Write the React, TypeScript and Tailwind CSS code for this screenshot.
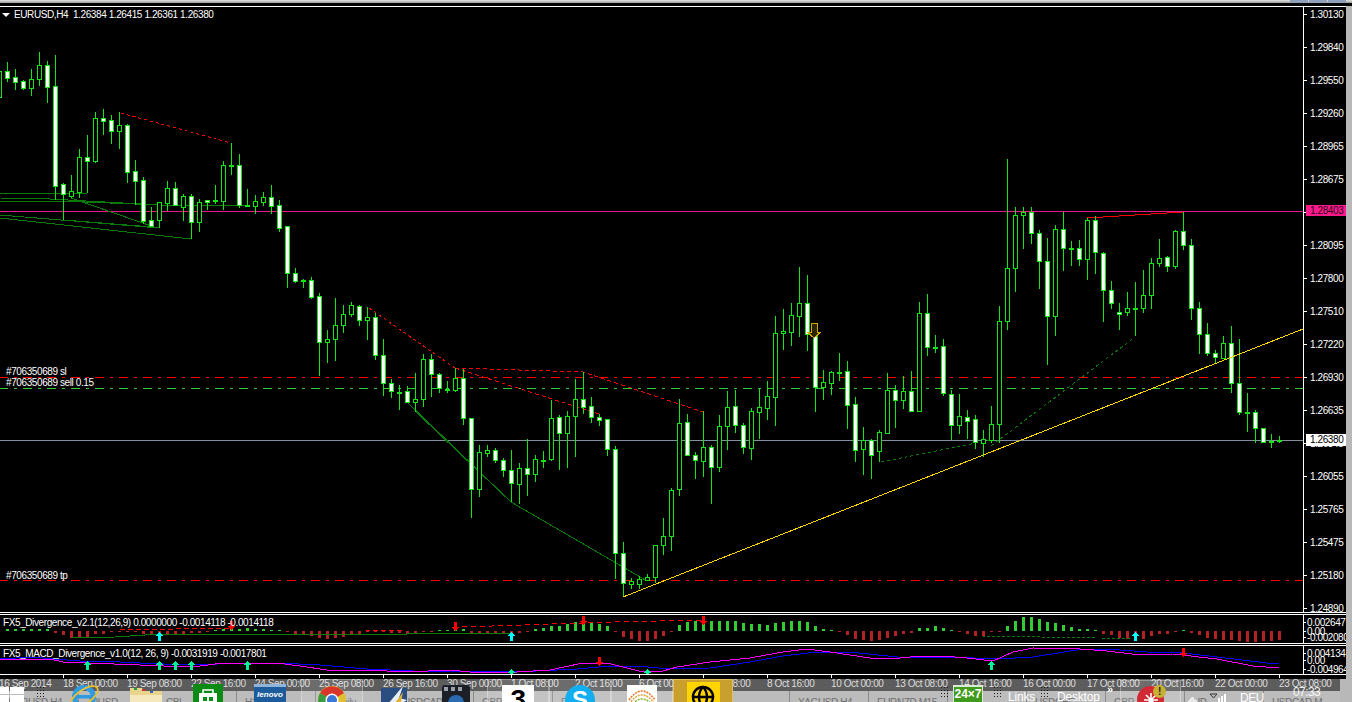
import { Globe } from "lucide-react";

// [high, bodyTop, bodyBottom, low, filled] -- one candle every 8px starting at x=-1
const candles: [number, number, number, number, number][] = [
  [60, 71, 97, 100, 0], [62, 71, 78, 82, 1], [69, 77, 82, 90, 1], [80, 81, 88, 90, 1], [69, 79, 88, 96, 0], [52, 65, 79, 86, 0], [61, 65, 87, 103, 1], [55, 86, 186, 200, 1],
  [183, 184, 194, 220, 1], [175, 191, 196, 198, 0], [149, 157, 192, 198, 0], [135, 157, 161, 193, 1], [112, 118, 161, 163, 0], [109, 118, 121, 135, 1], [115, 120, 131, 144, 1], [112, 125, 131, 149, 0],
  [124, 125, 172, 183, 1], [160, 171, 181, 205, 1], [177, 180, 221, 224, 1], [207, 220, 226, 226, 1], [202, 202, 220, 228, 0], [181, 188, 203, 211, 0], [182, 188, 205, 206, 1], [194, 196, 207, 221, 0],
  [194, 196, 222, 239, 1], [199, 202, 222, 232, 0], [200, 200, 202, 210, 1], [185, 200, 200, 204, 2], [161, 165, 201, 210, 0], [143, 165, 165, 175, 2], [154, 165, 205, 208, 1], [189, 205, 205, 206, 2],
  [195, 201, 206, 214, 0], [192, 197, 202, 206, 0], [185, 197, 206, 214, 1], [200, 205, 228, 232, 1], [226, 226, 273, 288, 1], [268, 273, 281, 283, 1], [279, 280, 280, 288, 2], [277, 280, 297, 299, 1],
  [293, 296, 342, 376, 1], [330, 339, 342, 363, 0], [298, 325, 339, 361, 0], [305, 314, 325, 333, 0], [302, 305, 314, 317, 0], [305, 306, 320, 326, 1], [307, 317, 320, 340, 0], [313, 317, 355, 360, 1],
  [339, 355, 383, 396, 1], [379, 383, 391, 398, 1], [385, 392, 392, 410, 2], [386, 391, 402, 403, 1], [373, 399, 402, 412, 0], [354, 359, 399, 407, 0], [354, 359, 374, 397, 1], [373, 374, 388, 393, 1],
  [381, 389, 389, 393, 2], [368, 378, 390, 392, 0], [369, 378, 418, 425, 1], [418, 418, 489, 518, 1], [445, 452, 489, 497, 0], [445, 450, 453, 457, 0], [448, 450, 460, 463, 1], [458, 460, 470, 477, 1],
  [450, 470, 483, 502, 1], [463, 468, 484, 504, 0], [439, 468, 474, 496, 1], [455, 459, 474, 482, 0], [451, 460, 460, 468, 2], [400, 418, 459, 461, 0], [415, 417, 433, 470, 1], [411, 416, 433, 468, 0],
  [379, 399, 416, 457, 0], [372, 399, 407, 414, 1], [397, 406, 417, 423, 1], [414, 417, 420, 426, 1], [419, 419, 449, 456, 1], [446, 449, 553, 579, 1], [542, 553, 583, 597, 1], [578, 581, 584, 589, 0],
  [576, 579, 584, 589, 0], [574, 577, 580, 581, 0], [545, 545, 577, 583, 0], [518, 536, 545, 555, 0], [488, 490, 536, 551, 0], [399, 423, 489, 496, 0], [414, 422, 455, 456, 1], [452, 455, 460, 479, 1],
  [411, 447, 461, 477, 0], [445, 447, 467, 504, 1], [415, 426, 467, 472, 0], [391, 407, 426, 450, 0], [390, 406, 425, 433, 1], [423, 425, 447, 454, 1], [408, 411, 448, 460, 0], [388, 407, 412, 439, 0],
  [381, 396, 408, 420, 0], [316, 333, 397, 426, 0], [309, 331, 333, 350, 0], [303, 315, 332, 346, 0], [267, 303, 316, 337, 0], [275, 303, 334, 351, 1], [334, 334, 387, 412, 1], [370, 382, 387, 400, 0],
  [371, 372, 383, 395, 0], [353, 372, 372, 381, 2], [361, 371, 405, 429, 1], [397, 404, 450, 462, 1], [427, 440, 449, 475, 0], [439, 440, 455, 479, 1], [430, 432, 451, 462, 0], [373, 390, 433, 433, 0],
  [385, 390, 400, 428, 1], [376, 391, 400, 409, 0], [371, 391, 411, 412, 1], [302, 313, 411, 411, 0], [294, 313, 347, 356, 1], [335, 347, 347, 353, 2], [339, 346, 393, 396, 1], [390, 394, 425, 440, 1],
  [394, 416, 425, 434, 0], [410, 417, 421, 439, 1], [415, 419, 442, 449, 1], [430, 439, 443, 457, 0], [406, 424, 440, 443, 0], [306, 321, 424, 443, 0], [159, 268, 321, 330, 0], [207, 215, 268, 292, 0],
  [207, 212, 215, 249, 0], [207, 212, 233, 244, 1], [230, 233, 261, 289, 1], [238, 261, 316, 365, 1], [225, 229, 316, 336, 0], [212, 229, 248, 271, 1], [241, 248, 248, 266, 2], [240, 248, 259, 266, 1],
  [218, 220, 259, 280, 0], [216, 220, 252, 274, 1], [252, 253, 290, 322, 1], [281, 290, 303, 309, 1], [303, 312, 314, 330, 1], [292, 308, 312, 316, 0], [282, 308, 308, 336, 2], [270, 295, 308, 313, 0],
  [258, 263, 295, 309, 0], [239, 258, 263, 267, 0], [256, 257, 266, 272, 1], [230, 231, 266, 269, 0], [212, 231, 245, 250, 1], [239, 245, 308, 320, 1], [302, 308, 334, 354, 1], [323, 334, 353, 356, 1],
  [350, 353, 357, 363, 1], [336, 343, 358, 359, 0], [326, 343, 383, 393, 1], [339, 383, 412, 415, 1], [393, 412, 412, 432, 2], [410, 412, 428, 443, 1], [428, 428, 442, 443, 1], [434, 441, 441, 448, 2],
  [436, 440, 440, 443, 2],
];

// signed height of the histogram bar, first bar at x=7, one every 8px
const bars = [
  2, 2, 2, 2, 2, 2, -2, -4, -7, -7, -6, -3, -3, -1, -1, -1, -1, -3, -4, -5, -4, -3, -3, -2, -2, -1, 1, 2, 2, 2, 3, 2, 2, 1, 1, -1, -3, -3, -5, -7, -8, -7, -6, -4, -3, -1, -1, -1, -2, -2, -3, -3, -1, -1, 1, 1, 1,
  2, -2, -2, -2, -2, -2, -2, -2, -1, 2, 3, 5, 5, 7, 9, 10, 8, 7, 5, -1, -6, -8, -10, -10, -8, -5, -1, 6, 9, 10, 10, 10, 10, 10, 10, 8, 7, 7, 6, 8, 9, 10, 10, 9, 5, 2, 1, -1, -4, -8, -9, -10, -9, -7, -5,
  -3, -2, 3, 3, 5, 3, 1, -1, -3, -5, -5, -1, -1, 5, 10, 14, 14, 12, 9, 8, 6, 4, 2, 2, 1, -3, -4, -7, -8, -8, -8, -5, -3, -3, -1, 1, -2, -4, -7, -8, -9, -9, -10, -11, -11, -10, -10, -9,
];

const prices = ["1.30130", "1.29840", "1.29550", "1.29260", "1.28965", "1.28675", "1.28385", "1.28095", "1.27800", "1.27510", "1.27220", "1.26930", "1.26635", "1.26345", "1.26055", "1.25765", "1.25475", "1.25180", "1.24890"];
const times = ["16 Sep 2014", "18 Sep 00:00", "19 Sep 08:00", "22 Sep 16:00", "24 Sep 00:00", "25 Sep 08:00", "26 Sep 16:00", "30 Sep 00:00", "1 Oct 08:00", "2 Oct 16:00", "6 Oct 00:00", "7 Oct 08:00", "8 Oct 16:00", "10 Oct 00:00", "13 Oct 08:00", "14 Oct 16:00", "16 Oct 00:00", "17 Oct 08:00", "20 Oct 16:00", "22 Oct 00:00", "23 Oct 08:00"];
const tabs = ["EURUSD,H4", "JPUSD", "CBL", "H1", "JF,Daily", "USDCAD", "GBP,M1", "EURAL", "", "", "XAGUSD,H4", "EURNZD,M15", "EUR", "USDCHF", "GBP", "UD", "USDCAD,M"];

const GREEN = "#14e614";
const DARK = "#0a7a0a";
const RED = "#ff0000";

const mainLines: { pts: string; color: string; dash?: string }[] = [
  // dark green divergence lines
  { pts: "0,193 87,193", color: DARK },
  { pts: "0,198 50,199 159,205 247,205", color: DARK },
  { pts: "0,201 60,201 159,205", color: DARK },
  { pts: "0,215 159,228", color: DARK },
  { pts: "0,218 191,239", color: DARK },
  { pts: "63,220 153,227", color: DARK },
  { pts: "71,198 157,228", color: DARK },
  { pts: "407,402 511,502 623,567 647,581", color: DARK },
  { pts: "415,411 511,502", color: DARK },
  { pts: "881,462 991,440", color: DARK, dash: "3 3" },
  { pts: "991,446 1135,337", color: DARK, dash: "3 3" },
  // red divergence lines
  { pts: "121,113 231,143", color: RED, dash: "3 3" },
  { pts: "369,308 455,368", color: RED, dash: "3 3" },
  { pts: "455,368 583,372 703,412", color: RED, dash: "4 3" },
  { pts: "455,368 599,414", color: RED, dash: "4 3" },
  { pts: "1087,218 1183,212", color: RED },
];

const blue = "0,659 33,657 53,659 80,661 100,661 140,663 187,665 217,664 247,663 277,663 320,665 367,669 413,671 450,671 490,672 537,671 577,669 610,666 637,666 670,669 710,668 750,662 783,656 817,652 850,652 897,657 950,657 997,659 1033,657 1083,649 1107,649 1147,652 1183,653 1217,657 1267,663 1279,664";
const magenta = "0,660 10,659 50,659 63,662 87,663 140,665 187,667 200,666 223,663 277,663 300,666 327,670 367,670 407,672 450,670 470,672 517,672 550,670 583,663 607,663 643,672 663,671 677,667 710,662 750,658 783,652 807,649 830,652 870,658 900,658 920,656 943,656 967,658 993,661 1013,652 1033,648 1080,649 1107,651 1140,655 1173,654 1217,659 1253,666 1279,668";

function Arrow({ x, y, up, color }: { x: number; y: number; up?: boolean; color: string }) {
  const c = x + 0.5;
  const d = up ? 1 : -1;
  const tip = up ? y : y + 9;
  const pts = [
    [c, tip],
    [c + 4, tip + 4 * d],
    [c + 1.5, tip + 4 * d],
    [c + 1.5, tip + 9 * d],
    [c - 1.5, tip + 9 * d],
    [c - 1.5, tip + 4 * d],
    [c - 4, tip + 4 * d],
  ];
  return <polygon points={pts.map((p) => p.join(",")).join(" ")} fill={color} />;
}

function Grip() {
  return <div className="w-[9px] h-[12px] mt-[7px] bg-[radial-gradient(#1c1c1c_1px,transparent_1px)] bg-[length:3px_3px]" />;
}

function Slot({ active, children }: { active?: boolean; children: React.ReactNode }) {
  return (
    <div className={"w-[62px] h-[23px] flex justify-center pt-[5px] " + (active ? "bg-white/10 border border-b-0 border-white/30" : "")}>
      {children}
    </div>
  );
}

export default function App() {
  return (
    <div className="w-[1352px] h-[702px] overflow-hidden bg-black flex flex-col font-['Liberation_Sans',sans-serif] text-white text-[10px] tracking-[-0.4px] leading-[10px]">
      {/* window edge */}
      <div className="h-[3px] shrink-0 bg-gradient-to-b from-[#e4e4e4] to-[#9a9a9a] flex justify-end pr-[6px] gap-[1px]">
        <div className="w-[18px] bg-[#8fa0b8]" />
        <div className="w-[18px] bg-[#8fa0b8]" />
        <div className="w-[18px] bg-[#8fa0b8]" />
      </div>
      <div className="h-[3px] shrink-0" />

      <div className="flex flex-1 min-h-0">
        <div className="w-[1346px] flex flex-col">
          {/* main chart */}
          <div className="h-[607px] shrink-0 flex border-t border-b border-white">
            <div className="relative w-[1303px] h-full overflow-hidden">
              <svg width={1303} height={605} viewBox="0 7 1303 605" shapeRendering="crispEdges" className="block">
                <line x1={0} x2={1303} y1={211.5} y2={211.5} stroke="#e6188c" />
                <line x1={0} x2={1303} y1={440.5} y2={440.5} stroke="#8090a0" />
                <line x1={0} x2={1303} y1={377.5} y2={377.5} stroke={RED} strokeDasharray="9 6 3 6" strokeDashoffset={1} />
                <line x1={0} x2={1303} y1={388.5} y2={388.5} stroke="#32cd32" strokeDasharray="9 6 3 6" strokeDashoffset={1} />
                <line x1={0} x2={1303} y1={580.5} y2={580.5} stroke={RED} strokeDasharray="9 6 3 6" strokeDashoffset={1} />
                {mainLines.map((l, i) => (
                  <polyline key={i} points={l.pts} fill="none" stroke={l.color} strokeDasharray={l.dash} />
                ))}
                {candles.map(([h, t, b, l, kind], i) => {
                  const x = -1 + i * 8;
                  return (
                    <g key={i}>
                      <line x1={x + 0.5} x2={x + 0.5} y1={h} y2={l} stroke={GREEN} />
                      {kind === 2 ? (
                        <rect x={x - 2} y={t} width={5} height={2} fill={GREEN} />
                      ) : (
                        <rect x={x - 1.5} y={t + 0.5} width={4} height={b - t} fill={kind === 1 ? "#ffffff" : "#000000"} stroke={GREEN} />
                      )}
                    </g>
                  );
                })}
                <polyline points="623,597 1303,329" fill="none" stroke="#ffd700" />
                <polygon points="811,323 817,323 817,332 821,332 814,338 807,332 811,332" fill="#2a2400" stroke="#d4a800" />
              </svg>
              <div className="absolute left-[2px] top-[6px] w-0 h-0 border-l-[4px] border-r-[4px] border-t-[4px] border-l-transparent border-r-transparent border-t-white" />
              <div className="absolute left-[14px] top-[3px] whitespace-pre">EURUSD,H4  1.26384 1.26415 1.26361 1.26380</div>
              <div className="absolute left-[6px] top-[360px]">#706350689 sl</div>
              <div className="absolute left-[6px] top-[371px]">#706350689 sell 0.15</div>
              <div className="absolute left-[6px] top-[564px]">#706350689 tp</div>
            </div>
            <div className="relative w-[43px] border-l border-white pt-[3px]">
              {prices.map((p) => (
                <div key={p} className="h-[33px] flex items-start gap-[3px]">
                  <div className="w-[3px] h-px mt-[4px] bg-white shrink-0" />
                  <span className="leading-[9px]">{p}</span>
                </div>
              ))}
              <div className="absolute left-[2px] right-0 top-[198px] h-[11px] bg-[#ff1a8c] text-[#2a0a1a] pl-[4px] leading-[11px]">1.28403</div>
              <div className="absolute left-[2px] right-0 top-[427px] h-[12px] bg-white text-black pl-[4px] leading-[12px]">1.26380</div>
            </div>
          </div>

          <div className="h-px shrink-0" />

          {/* divergence histogram */}
          <div className="h-[30px] shrink-0 flex border-t border-b border-white">
            <div className="relative w-[1303px] overflow-hidden">
              <svg width={1303} height={28} viewBox="0 615 1303 28" shapeRendering="crispEdges" className="block">
                {bars.map((v, i) => {
                  const x = 7 + i * 8;
                  return <rect key={i} x={x - 1} y={v > 0 ? 631 - v : 631} width={3} height={Math.abs(v)} fill={v > 0 ? "#32cd32" : "#b22222"} />;
                })}
                <polyline points="72,638 115,637 145,635 175,634 407,634 510,633" fill="none" stroke={DARK} />
                <polyline points="982,636 1097,638 1130,638" fill="none" stroke={DARK} strokeDasharray="3 2" />
                <polyline points="120,630 231,628" fill="none" stroke={RED} strokeDasharray="5 3" />
                <polyline points="365,630 403,631" fill="none" stroke={RED} strokeDasharray="5 3" />
                <polyline points="462,627 613,622 703,620" fill="none" stroke={RED} strokeDasharray="5 4" />
                <Arrow x={159} y={632} up color="#00ffff" />
                <Arrow x={511} y={632} up color="#00ffff" />
                <Arrow x={1135} y={632} up color="#00ffff" />
                <Arrow x={231} y={621} color="#ff0000" />
                <Arrow x={455} y={622} color="#ff0000" />
                <Arrow x={583} y={616} color="#ff0000" />
                <Arrow x={703} y={616} color="#ff0000" />
              </svg>
              <div className="absolute left-[3px] top-[3px] whitespace-pre">FX5_Divergence_v2.1(12,26,9) 0.0000000 -0.0014118 -0.0014118</div>
            </div>
            <div className="w-[43px] border-l border-white pt-[3px] overflow-hidden">
              <AxisRow h="h-[9px]" text="0.002647" />
              <AxisRow h="h-[6px]" text="0.00" />
              <AxisRow h="h-[9px]" text="-0.002080" />
            </div>
          </div>

          <div className="h-px shrink-0" />

          {/* macd */}
          <div className="h-[30px] shrink-0 flex border-t border-b border-white">
            <div className="relative w-[1303px] overflow-hidden">
              <svg width={1303} height={28} viewBox="0 646 1303 28" shapeRendering="crispEdges" className="block">
                <polyline points={blue} fill="none" stroke="#0000ff" />
                <polyline points={magenta} fill="none" stroke="#ff00ff" />
                {[87, 159, 175, 191, 247, 511, 647, 991].map((x) => (
                  <Arrow key={x} x={x} y={x === 511 || x === 647 ? 669 : 661} up color="#00f29a" />
                ))}
                <Arrow x={599} y={657} color="#ff0000" />
                <Arrow x={1183} y={648} color="#ff0000" />
              </svg>
              <div className="absolute left-[3px] top-[3px] whitespace-pre">FX5_MACD_Divergence_v1.0(12, 26, 9) -0.0031919 -0.0017801</div>
            </div>
            <div className="w-[43px] border-l border-white pt-[3px] overflow-hidden">
              <AxisRow h="h-[7px]" text="0.004134" />
              <AxisRow h="h-[9px]" text="0.00" />
              <AxisRow h="h-[9px]" text="-0.004964" />
            </div>
          </div>
        </div>
        <div className="w-[6px] bg-[#b8b8b8]" />
      </div>

      {/* time scale ticks */}
      <div className="h-[4px] shrink-0 flex pl-[63px] border-r-[6px] border-[#b8b8b8]">
        {times.slice(1).map((t) => (
          <div key={t} className="w-[64px] h-[3px] border-l border-white" />
        ))}
      </div>

      {/* time scale + taskbar over it */}
      <div className="relative h-[23px] shrink-0 bg-[#5c5c5c]">
        <div className="flex -ml-[1px]">
          {times.map((t) => (
            <div key={t} className="w-[64px] shrink-0 whitespace-nowrap leading-[10px] text-[#dcdcdc]">{t}</div>
          ))}
        </div>
        <div className="absolute left-0 right-0 bottom-0 h-[11px] bg-[#bcbcbc] flex overflow-hidden text-[#6e6e6e]">
          {tabs.map((t, i) => (
            <div key={i} className="w-[79px] shrink-0 pl-[8px] pt-[7px] border-r border-[#8c8c8c] leading-[10px] whitespace-nowrap">{t}</div>
          ))}
        </div>
        <div className="absolute right-0 top-0 bottom-0 w-[12px] bg-[#b8b8b8]" />
        <div className="absolute inset-0 flex overflow-hidden text-white">
          <div className="w-[24px] h-[16px] mt-[8px] grid grid-cols-[9px_14px] grid-rows-[7px_8px] gap-[1px]">
            <div className="bg-white" />
            <div className="bg-white" />
            <div className="bg-white" />
            <div className="bg-white" />
          </div>
          <div className="ml-[12px]"><Grip /></div>
          <div className="ml-[8px] flex">
            <Slot><IEIcon /></Slot>
            <Slot><FolderIcon /></Slot>
            <Slot><StoreIcon /></Slot>
            <Slot><LenovoIcon /></Slot>
            <Slot active><ChromeIcon /></Slot>
            <Slot><PlaneIcon /></Slot>
            <Slot><FilmIcon /></Slot>
            <Slot active><div className="w-[32px] h-[30px] bg-white text-black text-[28px] leading-[30px] font-bold text-center">3</div></Slot>
            <Slot active><SkypeIcon /></Slot>
            <Slot active><WaveIcon /></Slot>
            <div className="w-[60px] h-[23px] bg-[#c9a02e] border border-b-0 border-[#e2c060] flex justify-center pt-[2px]">
              <div className="w-[33px] h-[30px] bg-[#ffd400] flex justify-center pt-[3px]"><Globe size={24} strokeWidth={2.4} color="#000" /></div>
            </div>
          </div>
          <div className="ml-[207px]"><Grip /></div>
          <div className="ml-[4px] w-[30px] h-[24px] mt-[6px] bg-[#3f9a1e] border-t-2 border-x border-white/80 text-[12px] font-bold text-center leading-[14px] tracking-normal">24×7</div>
          <div className="ml-[10px]"><Grip /></div>
          <div className="ml-[6px] w-[26px] mt-[12px] text-[12px] leading-[12px] tracking-[-0.2px]">Links</div>
          <div className="ml-[6px]"><Grip /></div>
          <div className="ml-[8px] w-[42px] mt-[12px] text-[12px] leading-[12px] tracking-[-0.2px]">Desktop</div>
          <div className="ml-[8px] w-[6px] mt-[5px] text-[11px] font-bold">»</div>
          <div className="ml-[7px] w-[61px] h-[23px] mt-[1px] bg-white/10 border border-b-0 border-white/30 flex justify-center relative">
            <div className="w-[27px] h-[27px] mt-[5px] rounded-full bg-[#d22a34] flex justify-center pt-[7px]">
              <svg width={14} height={14} viewBox="0 0 14 14">
                <path d="M7 0 v14 M0 7 h14 M2 2 l10 10 M12 2 l-10 10" stroke="#fff" strokeWidth={1.6} />
              </svg>
            </div>
            <div className="absolute left-[32px] top-[4px] w-[13px] h-[13px] rounded-full bg-[#c8b030] text-[#222] text-[10px] font-bold text-center leading-[13px]">!</div>
          </div>
          <svg width={38} height={23} viewBox="0 0 38 23" className="ml-[7px]">
            <polyline points="0,23 4.5,18 9,23" fill="#e8e8e8" stroke="#fff" />
            <path d="M22 15 h7 l-3.5 4 z" fill="none" stroke="#333" />
            <rect x={30} y={19} width={2} height={4} fill="#fff" />
            <rect x={33} y={17} width={2} height={6} fill="#fff" />
            <rect x={36} y={15} width={2} height={8} fill="#fff" />
          </svg>
          <div className="ml-[14px] w-[22px] mt-[13px] text-[12px] leading-[12px] tracking-[-0.4px]">DEU</div>
          <div className="ml-[31px] mt-[7px] text-[12px] leading-[12px] tracking-[-0.6px] text-white/90">07:33</div>
        </div>
      </div>
    </div>
  );
}

function AxisRow({ h, text }: { h: string; text: string }) {
  return (
    <div className={h + " flex items-start gap-[1px] whitespace-nowrap"}>
      <div className="w-[2px] h-px mt-[4px] bg-white shrink-0" />
      <span className="leading-[9px]">{text}</span>
    </div>
  );
}

function IEIcon() {
  return (
    <svg width={30} height={30} viewBox="0 0 30 30" className="-mt-[2px]">
      <circle cx={15} cy={15} r={9.5} fill="none" stroke="#2f9ae0" strokeWidth={5} />
      <rect x={8} y={13} width={15} height={3.5} fill="#2f9ae0" />
      <rect x={22} y={17} width={6} height={4} fill="none" />
      <ellipse cx={15} cy={15} rx={16} ry={7} fill="none" stroke="#e8c030" strokeWidth={1.8} transform="rotate(-35 15 15)" />
    </svg>
  );
}

function FolderIcon() {
  return (
    <svg width={32} height={30} viewBox="0 0 32 30" className="mt-[3px]">
      <path d="M0 1 h12 l2 3 h18 v26 h-32 z" fill="#e8d48c" />
      <rect x={4} y={1} width={3} height={2} fill="#20a040" />
      <rect x={12} y={2} width={3} height={2} fill="#d23030" />
      <rect x={20} y={4} width={3} height={2} fill="#3060d0" />
      <rect x={0} y={8} width={32} height={22} fill="#f4e8bc" />
    </svg>
  );
}

function StoreIcon() {
  return (
    <svg width={30} height={30} viewBox="0 0 30 30">
      <rect width={30} height={30} fill="#0b8a14" />
      <path d="M10 9 v-3 h10 v3" fill="none" stroke="#fff" strokeWidth={1.5} />
      <rect x={6} y={9} width={18} height={18} fill="#fff" />
      <rect x={10} y={13} width={4} height={4} fill="#0b8a14" />
      <rect x={16} y={13} width={4} height={4} fill="#0b8a14" />
    </svg>
  );
}

function LenovoIcon() {
  return (
    <div className="w-[32px] h-[30px] bg-[#1c5c9c] border-t-[3px] border-[#8fb4d8] text-white text-[8px] font-bold italic text-center leading-[16px] tracking-normal">lenovo</div>
  );
}

function ChromeIcon() {
  return (
    <svg width={30} height={30} viewBox="0 0 30 30">
      <circle cx={15} cy={15} r={14} fill="#e0c030" />
      <path d="M15 15 L3 8 A14 14 0 0 1 27 8 Z" fill="#d8362a" />
      <path d="M15 15 L3 8 A14 14 0 0 0 15 29 Z" fill="#3a9a3e" />
      <circle cx={15} cy={15} r={6.5} fill="#fff" />
      <circle cx={15} cy={15} r={5} fill="#3a78d8" />
    </svg>
  );
}

function PlaneIcon() {
  return (
    <svg width={30} height={30} viewBox="0 0 30 30">
      <rect x={2} y={4} width={26} height={26} fill="#2a4e80" />
      <path d="M4 26 L24 2 L20 14 L28 16 L10 28 Z" fill="#e8eef6" />
      <path d="M14 22 L24 8 L22 18 Z" fill="#e0b030" />
    </svg>
  );
}

function FilmIcon() {
  return (
    <svg width={30} height={30} viewBox="0 0 30 30">
      <rect x={1} y={1} width={28} height={29} rx={3} fill="#1c2026" />
      <rect x={3} y={3} width={4} height={4} fill="#9aa0a8" />
      <rect x={10} y={3} width={4} height={4} fill="#9aa0a8" />
      <rect x={17} y={3} width={4} height={4} fill="#9aa0a8" />
      <circle cx={15} cy={19} r={8} fill="#2a6ab0" />
    </svg>
  );
}

function SkypeIcon() {
  return (
    <div className="relative w-[30px] h-[30px] rounded-full bg-[#12aef0] text-white text-[24px] font-bold text-center leading-[30px] tracking-normal">S</div>
  );
}

function WaveIcon() {
  return (
    <svg width={30} height={30} viewBox="0 0 30 30">
      <rect width={30} height={30} fill="#fff" />
      <path d="M2 15 Q15 -3 28 15" fill="none" stroke="#e87830" strokeWidth={1.6} strokeDasharray="2 1" />
      <path d="M2 19 Q15 1 28 19" fill="none" stroke="#e0a840" strokeWidth={1.6} strokeDasharray="2 1" />
      <path d="M2 23 Q15 5 28 23" fill="none" stroke="#90b840" strokeWidth={1.6} strokeDasharray="2 1" />
      <path d="M2 27 Q15 9 28 27" fill="none" stroke="#50a850" strokeWidth={1.6} strokeDasharray="2 1" />
    </svg>
  );
}
